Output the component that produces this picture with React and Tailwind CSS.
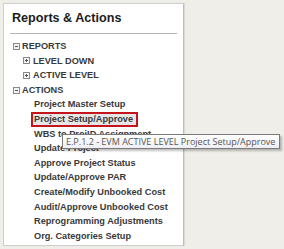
import React from "react";

const Minus = () => (
  <svg width="7" height="7" viewBox="0 0 7 7" className="shrink-0">
    <rect x="0.5" y="0.5" width="6" height="6" fill="#f4f4f4" stroke="#8a8a8a" />
    <line x1="2" y1="3.5" x2="5" y2="3.5" stroke="#555" />
  </svg>
);
const Plus = () => (
  <svg width="7" height="7" viewBox="0 0 7 7" className="shrink-0">
    <rect x="0.5" y="0.5" width="6" height="6" fill="#f4f4f4" stroke="#8a8a8a" />
    <line x1="2" y1="3.5" x2="5" y2="3.5" stroke="#555" />
    <line x1="3.5" y1="2" x2="3.5" y2="5" stroke="#555" />
  </svg>
);

const actions = [
  "Project Master Setup",
  "Project Setup/Approve",
  "WBS to ProjID Assignment",
  "Update Project",
  "Approve Project Status",
  "Update/Approve PAR",
  "Create/Modify Unbooked Cost",
  "Audit/Approve Unbooked Cost",
  "Reprogramming Adjustments",
  "Org. Categories Setup",
];

export default function App() {
  return (
    <div
      className="relative w-[284px] h-[249px] bg-[#efeee9] pt-[3px] pl-[3px] overflow-hidden"
      style={{ fontFamily: '"Liberation Sans", Arial, sans-serif' }}
    >
      <div className="w-[181px] h-[243px] bg-white border border-[#cfcfcf] border-r-[#bdbdbd] shadow-[1px_0_1px_rgba(0,0,0,0.08)] flex flex-col">
        <div className="pl-[8px] pt-[7px] text-[12.6px] leading-[15px] font-bold text-[#1c1c1c]">
          Reports &amp; Actions
        </div>
        <div className="mx-[6px] mt-[7px] h-px bg-[#b5b5b5]" />
        <div className="flex flex-col pt-[5px] text-[9.2px] font-bold text-[#3a3a3a] leading-[14.6px]">
          <div className="flex items-center gap-[2px] pl-[9px]">
            <Minus />
            <span>REPORTS</span>
          </div>
          <div className="flex items-center gap-[3px] pl-[19px]">
            <Plus />
            <span>LEVEL DOWN</span>
          </div>
          <div className="flex items-center gap-[3px] pl-[19px]">
            <Plus />
            <span>ACTIVE LEVEL</span>
          </div>
          <div className="flex items-center gap-[2px] pl-[9px]">
            <Minus />
            <span>ACTIONS</span>
          </div>
          {actions.map((a, i) =>
            i === 1 ? (
              <div key={a} className="pl-[27px] flex h-[14.6px] items-center">
                <span className="border-2 border-[#c4141c] bg-[#e6e6e6] pl-[1px] pr-[3px] leading-[10.5px]">
                  {a}
                </span>
              </div>
            ) : (
              <div key={a} className="pl-[30px]">
                {a}
              </div>
            )
          )}
        </div>
      </div>
      <div
        className="absolute left-[62px] top-[134px] w-[218px] h-[15px] border border-[#7a7a7a] bg-gradient-to-b from-white to-[#eeeef4] shadow-[2px_2px_2px_rgba(0,0,0,0.25)] text-[9px] leading-[13px] text-[#555] pl-[3px] whitespace-nowrap"
        style={{ fontFamily: '"Open Sans", "Liberation Sans", sans-serif' }}
      >
        E.P.1.2 - EVM ACTIVE LEVEL Project Setup/Approve
      </div>
    </div>
  );
}
